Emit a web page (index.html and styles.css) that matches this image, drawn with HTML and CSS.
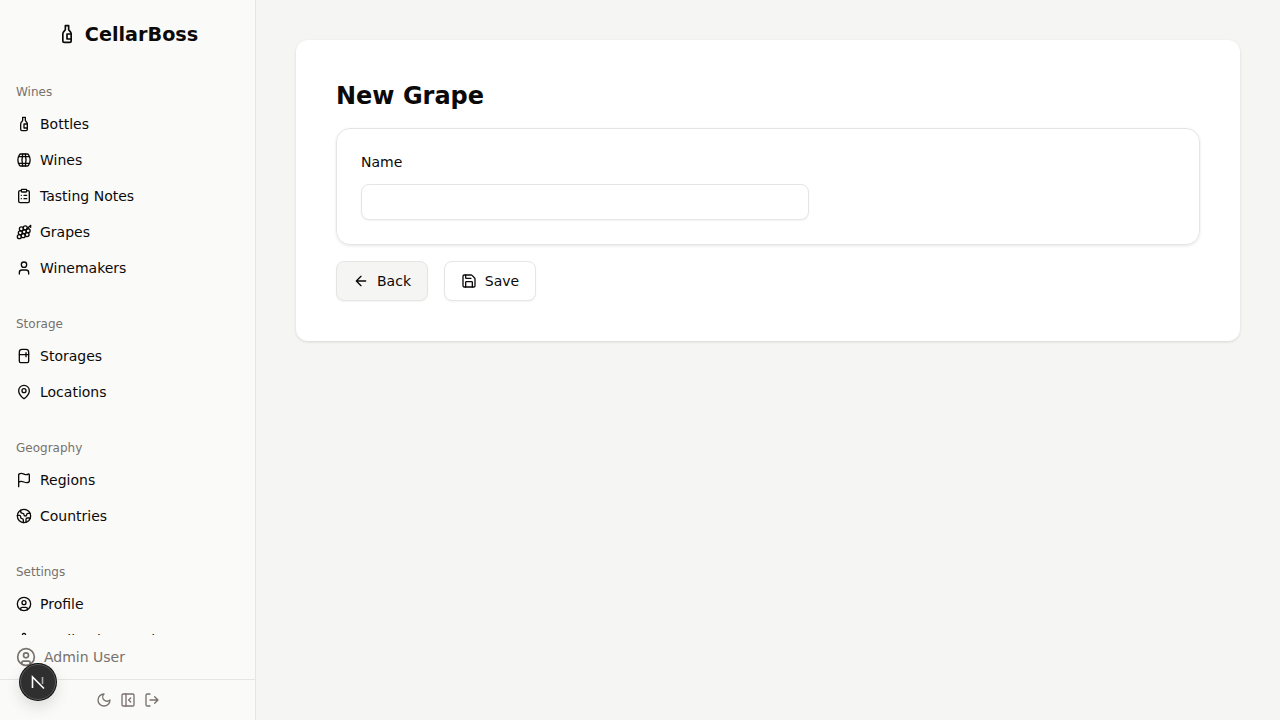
FILE: index.html
```html
<!DOCTYPE html>
<html lang="en">
<head>
<meta charset="utf-8">
<title>New Grape</title>
<link rel="stylesheet" href="styles.css">
</head>
<body>
<div class="app">
  <aside class="sidebar">
    <div class="brand">
      <svg class="brand-icon" viewBox="0 0 24 24"><path d="M10 2h4v4.500c0 1.500 3 2.500 3 5.500v8a2 2 0 0 1-2 2H9a2 2 0 0 1-2-2v-8c0-3 3-4 3-5.500z"/><path d="M17 12h-5v6h5"/></svg>
      <span>CellarBoss</span>
    </div>
    <nav class="nav">
      <div class="group">
        <div class="group-label">Wines</div>
        <a class="item"><svg class="ico" viewBox="0 0 24 24"><path d="M10 2h4v4.500c0 1.500 3 2.500 3 5.500v8a2 2 0 0 1-2 2H9a2 2 0 0 1-2-2v-8c0-3 3-4 3-5.500z"/><path d="M17 12h-5v6h5"/></svg>Bottles</a>
        <a class="item"><svg class="ico" viewBox="0 0 24 24"><path d="M10 3a41 41 0 0 0 0 18"/><path d="M14 3a41 41 0 0 1 0 18"/><path d="M17 3a2 2 0 0 1 1.680.920 15.250 15.250 0 0 1 0 16.160A2 2 0 0 1 17 21H7a2 2 0 0 1-1.680-.920 15.250 15.250 0 0 1 0-16.160A2 2 0 0 1 7 3z"/><path d="M3.840 17h16.320"/><path d="M3.840 7h16.320"/></svg>Wines</a>
        <a class="item"><svg class="ico" viewBox="0 0 24 24"><rect x="8" y="2" width="8" height="4" rx="1"/><path d="M16 4h2a2 2 0 0 1 2 2v14a2 2 0 0 1-2 2H6a2 2 0 0 1-2-2V6a2 2 0 0 1 2-2h2"/><path d="M12 11h4M12 16h4M8 11h.01M8 16h.01"/></svg>Tasting Notes</a>
        <a class="item"><svg class="ico" viewBox="0 0 24 24"><path d="M22 5V2l-5.890 5.890"/><circle cx="16.600" cy="15.890" r="3"/><circle cx="8.110" cy="7.400" r="3"/><circle cx="12.350" cy="11.650" r="3"/><circle cx="13.910" cy="5.850" r="3"/><circle cx="18.150" cy="10.090" r="3"/><circle cx="6.560" cy="13.200" r="3"/><circle cx="10.800" cy="17.440" r="3"/><circle cx="5" cy="19" r="3"/></svg>Grapes</a>
        <a class="item"><svg class="ico" viewBox="0 0 24 24"><path d="M19 21v-2a4 4 0 0 0-4-4H9a4 4 0 0 0-4 4v2"/><circle cx="12" cy="7" r="4"/></svg>Winemakers</a>
      </div>
      <div class="group">
        <div class="group-label">Storage</div>
        <a class="item"><svg class="ico" viewBox="0 0 24 24"><path d="M5 6a4 4 0 0 1 4-4h6a4 4 0 0 1 4 4v14a2 2 0 0 1-2 2H7a2 2 0 0 1-2-2V6z"/><path d="M5 10h14"/><path d="M15 7v6"/></svg>Storages</a>
        <a class="item"><svg class="ico" viewBox="0 0 24 24"><path d="M20 10c0 5-5.500 10.200-7.400 11.800a1 1 0 0 1-1.200 0C9.500 20.200 4 15 4 10a8 8 0 0 1 16 0"/><circle cx="12" cy="10" r="3"/></svg>Locations</a>
      </div>
      <div class="group">
        <div class="group-label">Geography</div>
        <a class="item"><svg class="ico" viewBox="0 0 24 24"><path d="M4 22V4a1 1 0 0 1 .4-.8A6 6 0 0 1 8 2c3 0 5 2 7.333 2q2 0 3.067-.8A1 1 0 0 1 20 4v10a1 1 0 0 1-.4.8A6 6 0 0 1 16 16c-3 0-5-2-8-2a6 6 0 0 0-4 1.528"/></svg>Regions</a>
        <a class="item"><svg class="ico" viewBox="0 0 24 24"><path d="M21.540 15H17a2 2 0 0 0-2 2v4.540"/><path d="M7 3.340V5a3 3 0 0 0 3 3a2 2 0 0 1 2 2c0 1.100.9 2 2 2a2 2 0 0 0 2-2c0-1.100.9-2 2-2h3.170"/><path d="M11 21.950V18a2 2 0 0 0-2-2a2 2 0 0 1-2-2v-1a2 2 0 0 0-2-2H2.050"/><circle cx="12" cy="12" r="10"/></svg>Countries</a>
      </div>
      <div class="group">
        <div class="group-label">Settings</div>
        <a class="item"><svg class="ico" viewBox="0 0 24 24"><circle cx="12" cy="12" r="10"/><circle cx="12" cy="10" r="3"/><path d="M7 20.700V19a2 2 0 0 1 2-2h6a2 2 0 0 1 2 2v1.700"/></svg>Profile</a>
        <a class="item"><svg class="ico" viewBox="0 0 24 24"><path d="M12.220 2h-.44a2 2 0 0 0-2 2v.18a2 2 0 0 1-1 1.730l-.43.25a2 2 0 0 1-2 0l-.15-.08a2 2 0 0 0-2.730.73l-.22.38a2 2 0 0 0 .73 2.730l.15.1a2 2 0 0 1 1 1.720v.51a2 2 0 0 1-1 1.740l-.15.09a2 2 0 0 0-.73 2.730l.22.38a2 2 0 0 0 2.730.73l.15-.08a2 2 0 0 1 2 0l.43.25a2 2 0 0 1 1 1.730V20a2 2 0 0 0 2 2h.44a2 2 0 0 0 2-2v-.18a2 2 0 0 1 1-1.730l.43-.25a2 2 0 0 1 2 0l.15.08a2 2 0 0 0 2.730-.73l.22-.39a2 2 0 0 0-.73-2.730l-.15-.08a2 2 0 0 1-1-1.740v-.5a2 2 0 0 1 1-1.740l.15-.09a2 2 0 0 0 .73-2.730l-.22-.38a2 2 0 0 0-2.730-.73l-.15.08a2 2 0 0 1-2 0l-.43-.25a2 2 0 0 1-1-1.730V4a2 2 0 0 0-2-2z"/><circle cx="12" cy="12" r="3"/></svg>Application Settings</a>
      </div>
    </nav>
    <div class="user">
      <svg class="user-ico" viewBox="0 0 24 24"><circle cx="12" cy="12" r="10"/><circle cx="12" cy="10" r="3"/><path d="M7 20.700V19a2 2 0 0 1 2-2h6a2 2 0 0 1 2 2v1.700"/></svg>
      <span>Admin User</span>
    </div>
    <div class="foot">
      <svg class="foot-ico" viewBox="0 0 24 24"><path d="M12 3a6 6 0 0 0 9 9 9 9 0 1 1-9-9z"/></svg>
      <svg class="foot-ico" viewBox="0 0 24 24"><rect x="3" y="3" width="18" height="18" rx="2"/><path d="M9 3v18M16 15l-3-3 3-3"/></svg>
      <svg class="foot-ico" viewBox="0 0 24 24"><path d="M9 21H5a2 2 0 0 1-2-2V5a2 2 0 0 1 2-2h4M16 17l5-5-5-5M21 12H9"/></svg>
    </div>
    <div class="next-badge">
      <svg viewBox="0 0 24 24"><path d="M6.500 18V7l11.500 11.500"/><path class="next-bar" d="M16.500 7v7"/></svg>
    </div>
  </aside>
  <main class="main">
    <section class="card">
      <h1 class="title">New Grape</h1>
      <form class="form-box">
        <label class="label" for="name">Name</label>
        <input class="input" id="name" type="text">
      </form>
      <div class="actions">
        <button class="btn btn-back" type="button"><svg class="btn-ico" viewBox="0 0 24 24"><path d="m12 19-7-7 7-7M19 12H5"/></svg>Back</button>
        <button class="btn" type="button"><svg class="btn-ico" viewBox="0 0 24 24"><path d="M15.200 3a2 2 0 0 1 1.400.6l3.800 3.800a2 2 0 0 1 .6 1.400V19a2 2 0 0 1-2 2H5a2 2 0 0 1-2-2V5a2 2 0 0 1 2-2z"/><path d="M17 21v-7a1 1 0 0 0-1-1H8a1 1 0 0 0-1 1v7M7 3v4a1 1 0 0 0 1 1h7"/></svg>Save</button>
      </div>
    </section>
  </main>
</div>
</body>
</html>
```
FILE: styles.css
```css
* { box-sizing: border-box; }
html, body { margin: 0; height: 100%; }
body {
  font-family: "DejaVu Sans", sans-serif;
  font-size: 14px;
  color: #0c0a09;
  background: #f5f5f4;
  overflow: hidden;
}
svg { fill: none; stroke: currentColor; stroke-width: 2; stroke-linecap: round; stroke-linejoin: round; flex: none; }
.app { display: flex; height: 720px; }
.sidebar {
  position: relative;
  width: 256px;
  flex: none;
  display: flex;
  flex-direction: column;
  background: #fafaf9;
  border-right: 1px solid #e7e5e4;
}
.brand {
  height: 68px;
  flex: none;
  display: flex;
  align-items: center;
  justify-content: center;
  gap: 8px;
  font-size: 19.2px;
  font-weight: 700;
}
.brand-icon { width: 20px; height: 20px; }
.nav { height: 567px; flex: none; overflow: hidden; padding-top: 13px; }
.group { margin-bottom: 27px; }
.group-label {
  height: 21px;
  padding: 1px 0 0 16px;
  line-height: 20px;
  margin-bottom: 4px;
  font-size: 12px;
  color: #78716c;
}
.item {
  display: flex;
  align-items: center;
  gap: 8px;
  height: 36px;
  padding-left: 16px;
  white-space: nowrap;
}
.ico { width: 16px; height: 16px; }
.user {
  height: 44px;
  flex: none;
  display: flex;
  align-items: center;
  gap: 8px;
  padding: 0 0 1px 16px;
  color: #78716c;
}
.user-ico { width: 20px; height: 20px; }
.foot {
  height: 41px;
  flex: none;
  display: flex;
  align-items: center;
  justify-content: center;
  gap: 8px;
  border-top: 1px solid #e7e5e4;
  color: #78716c;
}
.foot-ico { width: 16px; height: 16px; }
.next-badge {
  position: absolute;
  left: 20px;
  top: 664px;
  width: 36px;
  height: 36px;
  border-radius: 50%;
  background: #2f2f2f;
  border: 1px solid #5a5a5a;
  box-shadow: 0 0 0 1px #111, 0 6px 16px rgba(0,0,0,.14);
  display: flex;
  align-items: center;
  justify-content: center;
  color: #fff;
}
.next-badge svg { width: 24px; height: 24px; stroke-width: 1.6; stroke-linecap: butt; stroke-linejoin: miter; }
.next-bar { opacity: .6; }
.main { flex: 1; padding: 40px; }
.card {
  width: 944px;
  height: 301px;
  padding: 40px;
  background: #fff;
  border-radius: 12px;
  box-shadow: 0 1px 3px rgba(0,0,0,.12);
}
.title { margin: 0 0 15px; height: 33px; font-size: 24px; line-height: 32px; font-weight: 700; color: #0c0a09; }
.form-box {
  height: 117px;
  padding: 24px;
  border: 1px solid #e7e5e4;
  border-radius: 14px;
  box-shadow: 0 1px 3px rgba(0,0,0,.1);
}
.label { display: block; line-height: 18px; margin-bottom: 13px; font-size: 14px; }
.input {
  display: block;
  width: 448px;
  height: 36px;
  border: 1px solid #e7e5e4;
  border-radius: 8px;
  background: #fff;
  box-shadow: 0 1px 2px rgba(0,0,0,.05);
}
.actions { display: flex; gap: 16px; margin-top: 16px; }
.btn {
  display: flex;
  align-items: center;
  justify-content: center;
  gap: 8px;
  width: 92px;
  height: 40px;
  font: inherit;
  color: #0c0a09;
  background: #fff;
  border: 1px solid #e7e5e4;
  border-radius: 8px;
  box-shadow: 0 1px 2px rgba(0,0,0,.05);
}
.btn-back { background: #f5f5f4; }
.btn-ico { width: 16px; height: 16px; }
```
